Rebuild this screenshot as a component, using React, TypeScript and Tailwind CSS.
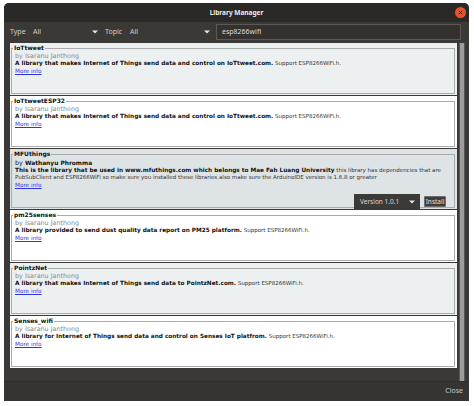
import React from "react";

type Lib = {
  name: string;
  author: string;
  bold: string;
  rest: string;
  bg: string;
  selected?: boolean;
};

const libs: Lib[] = [
  {
    name: "IoTtweet",
    author: "Isaranu Janthong",
    bold: "A library that makes Internet of Things send data and control on IoTtweet.com.",
    rest: "Support ESP8266WiFi.h.",
    bg: "bg-[#edf0f1]",
  },
  {
    name: "IoTtweetESP32",
    author: "Isaranu Janthong",
    bold: "A library that makes Internet of Things send data and control on IoTtweet.com.",
    rest: "Support ESP8266WiFi.h.",
    bg: "bg-white",
  },
  {
    name: "MFUthings",
    author: "Wathanyu Phromma",
    bold: "This is the library that be used in www.mfuthings.com which belongs to Mae Fah Luang University",
    rest: "this library has dependencies that are",
    bg: "bg-[#dee4e6]",
    selected: true,
  },
  {
    name: "pm25senses",
    author: "Isaranu Janthong",
    bold: "A library provided to send dust quality data report on PM25 platform.",
    rest: "Support ESP8266WiFi.h.",
    bg: "bg-white",
  },
  {
    name: "PointzNet",
    author: "Isaranu Janthong",
    bold: "A library that makes Internet of Things send data to PointzNet.com.",
    rest: "Support ESP8266WiFi.h.",
    bg: "bg-[#edf0f1]",
  },
  {
    name: "Senses_wifi",
    author: "Isaranu Janthong",
    bold: "A library for Internet of Things send data and control on Senses IoT platfrom.",
    rest: "Support ESP8266WiFi.h.",
    bg: "bg-white",
  },
];

function Caret({ className = "" }: { className?: string }) {
  return (
    <svg width="6" height="4" viewBox="0 0 6 4" className={className}>
      <path d="M0 0.5 L6 0.5 L3 3.5 Z" fill="#e6e6e6" />
    </svg>
  );
}

function LibraryItem({ lib }: { lib: Lib }) {
  return (
    <div className={`${lib.bg} ${lib.selected ? "h-[60px]" : "h-[52px]"} pl-[1px] pr-[2px] pt-[1px]`}>
      <fieldset
        className={`${lib.selected ? "h-[58px]" : "h-[50px]"} border border-[#a9abac] px-[1px] relative`}
      >
        <legend className="px-[1px] text-[6px] leading-[8px] font-bold text-[#111]">{lib.name}</legend>
        <div className={`pl-[2px] whitespace-nowrap ${lib.selected ? "pt-[2px]" : "pt-[1px]"}`}>
          {lib.selected ? (
            <p className="text-[6.4px] leading-[7px] text-[#222]">
              by <span className="text-[5.9px] font-bold text-[#111]">{lib.author}</span>
            </p>
          ) : (
            <p className="text-[6.4px] leading-[7px] text-[#8a8a8a]">by {lib.author}</p>
          )}
          <p className="text-[5.75px] leading-[7px] text-[#111]">
            <span className="font-bold">{lib.bold}</span>{" "}
            <span className="text-[5.5px] text-[#333]">{lib.rest}</span>
            {lib.selected && (
              <>
                <br />
                <span className="text-[5.5px] text-[#333]">
                  PubSubClient and ESP8266WiFi so make sure you installed these libraries also make sure the ArduinoIDE version is 1.6.8 or greater
                </span>
              </>
            )}
          </p>
          <p className="text-[5.7px] leading-[8px] text-[#2a36e8] underline">More info</p>
        </div>
        {lib.selected && (
          <div className="absolute right-[8px] bottom-[-2px] flex items-center gap-[4px] font-['Noto_Sans',sans-serif]">
            <div className="flex h-[15px] w-[66px] items-center justify-between bg-[#3b3a38] pl-[6px] pr-[5px] text-[6.5px] text-[#d8d8d8]">
              <span>Version 1.0.1</span>
              <Caret />
            </div>
            <div className="flex h-[11px] w-[22px] items-center justify-center rounded-[1px] border border-[#6d6b68] bg-[#403e3c] text-[6.5px] text-[#e0e0e0]">
              Install
            </div>
          </div>
        )}
      </fieldset>
    </div>
  );
}

export default function App() {
  return (
    <div className="h-[406px] w-[474px] bg-white pl-[4px] pt-[3px] font-['DejaVu_Sans',sans-serif]">
      <div className="flex h-[398px] w-[465px] flex-col overflow-hidden rounded-t-[5px] bg-[#3a3937]">
        <div className="relative flex h-[19px] shrink-0 items-center justify-center bg-[#2b2927]">
          <span className="font-['Noto_Sans',sans-serif] text-[6.5px] font-bold text-[#ececec]">Library Manager</span>
          <div className="absolute right-[3px] top-[4px] flex h-[11px] w-[11px] items-center justify-center rounded-full bg-[#e95420]">
            <svg width="5" height="5" viewBox="0 0 5 5">
              <path d="M0.8 0.8 L4.2 4.2 M4.2 0.8 L0.8 4.2" stroke="#3a1a0d" strokeWidth="1" />
            </svg>
          </div>
        </div>

        <div className="flex h-[20px] shrink-0 items-center bg-[#3b3936] pl-[6px] font-['Noto_Sans',sans-serif] text-[7px] text-[#cfcfcf]">
          <span className="w-[20px]">Type</span>
          <div className="flex w-[72px] items-center justify-between pl-[3px] pr-[4px]">
            <span>All</span>
            <Caret />
          </div>
          <span className="ml-[3px] w-[21px]">Topic</span>
          <div className="flex w-[86px] items-center justify-between pl-[4px] pr-[2px]">
            <span>All</span>
            <Caret />
          </div>
          <div className="ml-[4px] flex h-[16px] w-[245px] items-center border border-[#5c5955] bg-[#34312f] pl-[5px] text-[#dcdcdc]">
            esp8266wifi
          </div>
        </div>

        <div className="mt-[1px] flex h-[338px] shrink-0 pl-[6px] pr-[4px]">
          <div className="flex w-[447px] flex-col gap-[1px]">
            {libs.map((lib) => (
              <LibraryItem key={lib.name} lib={lib} />
            ))}
          </div>
          <div className="ml-[2px] w-[6px] border-x border-[#5a5855] bg-[#9c9c9c]" />
        </div>

        <div className="flex flex-1 items-center justify-end border-t border-[#302e2c] bg-[#363432] pr-[6px] font-['Noto_Sans',sans-serif] text-[7px] text-[#c8c8c8]">
          Close
        </div>
      </div>
    </div>
  );
}
